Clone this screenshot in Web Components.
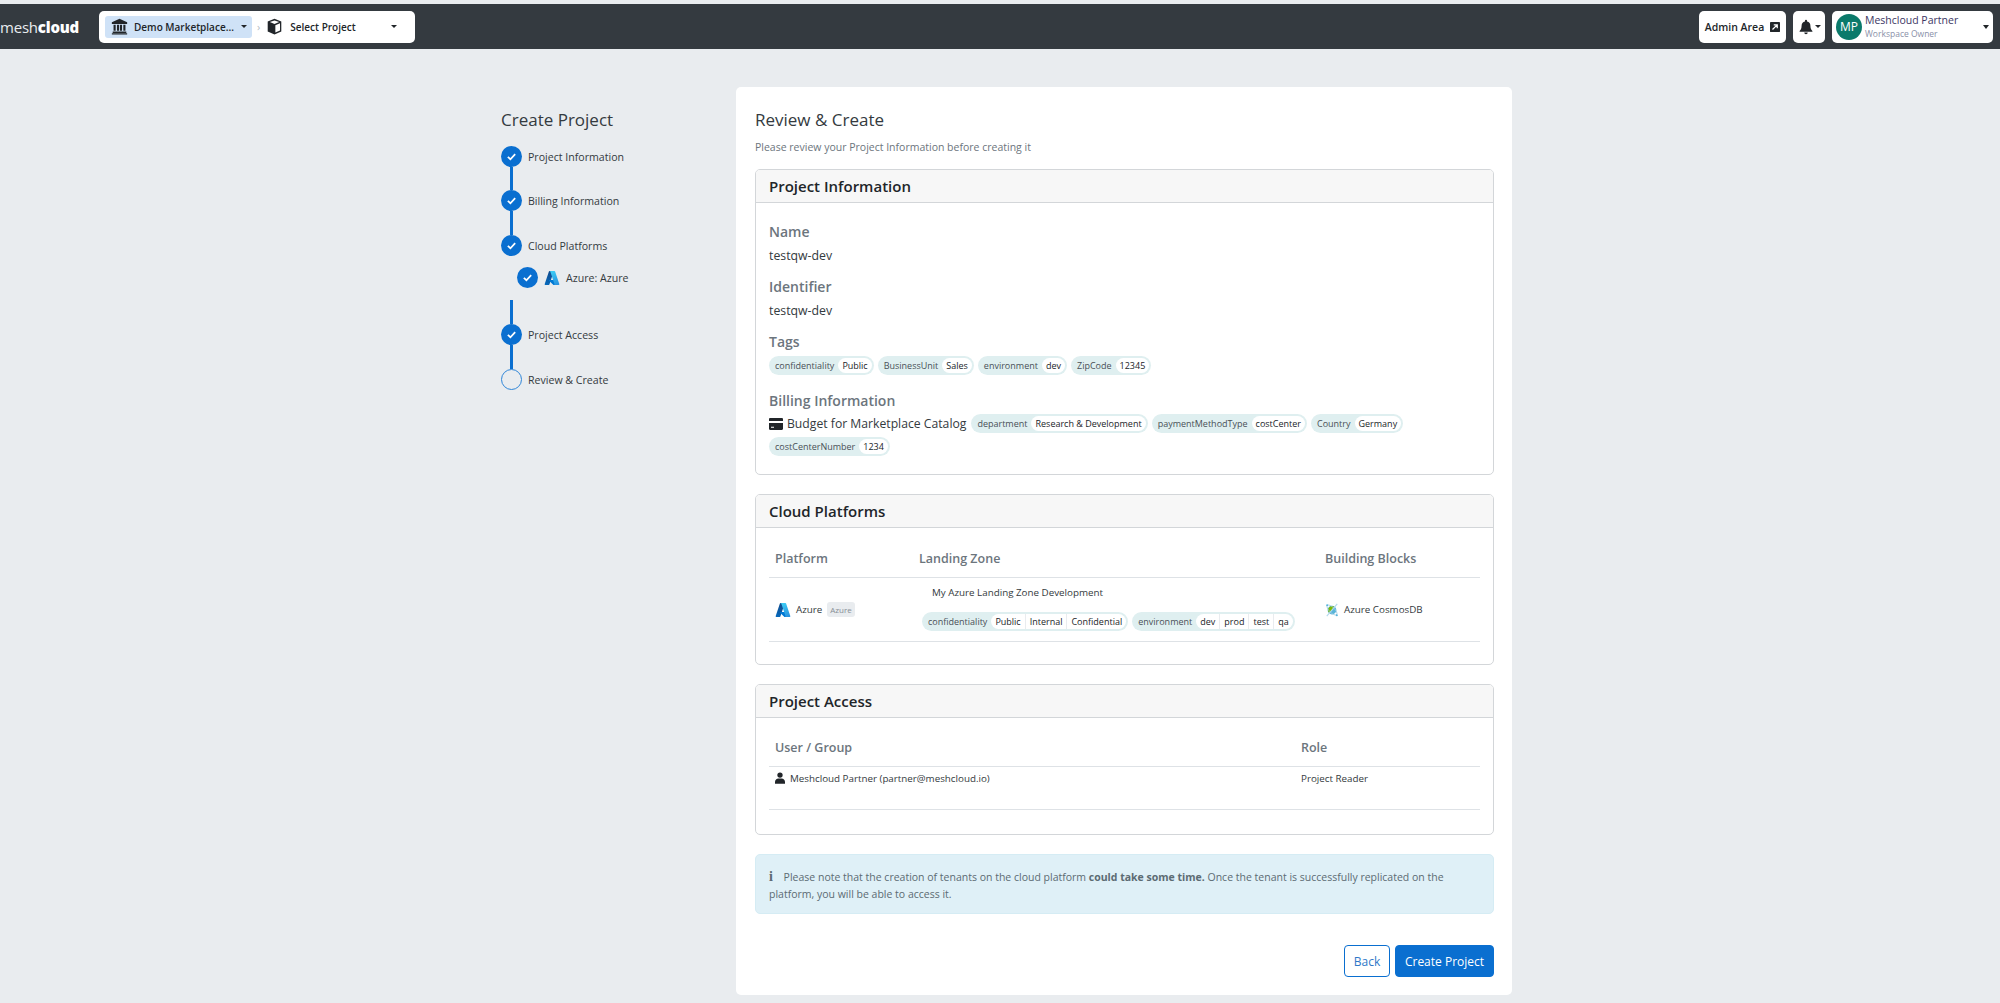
<!DOCTYPE html>
<html lang="en">
<head>
<meta charset="utf-8">
<title>Create Project</title>
<style>
  html, body { margin: 0; height: 100%; overflow: hidden; }
  body { background: #e9ecef; padding-top: 4px; box-sizing: border-box; font-family: "Open Sans", "Liberation Sans", sans-serif; color: #343a40; }
</style>
</head>
<body>
<mesh-navbar></mesh-navbar>
<mesh-page>
  <mesh-stepper slot="side"></mesh-stepper>
  <mesh-review></mesh-review>
</mesh-page>

<script>
const ICONS = {
  check: '<svg viewBox="0 0 12 12" width="11" height="11"><path d="M2 6.4 4.8 9 10 3.4" fill="none" stroke="#fff" stroke-width="1.9"/></svg>',
  azure: size => `<svg viewBox="0 0 96 96" width="${size}" height="${size}"><defs><linearGradient id="az1" x1="0.6" y1="0" x2="0.2" y2="1"><stop offset="0" stop-color="#114a8b"/><stop offset="1" stop-color="#0669bc"/></linearGradient><linearGradient id="az2" x1="0.3" y1="0" x2="0.7" y2="1"><stop offset="0" stop-color="#3ccbf4"/><stop offset="1" stop-color="#2892df"/></linearGradient></defs><path d="M33.34 6.54h26.04L32.36 86.55a4.15 4.15 0 0 1-3.94 2.83H8.15a4.14 4.14 0 0 1-3.93-5.47L29.4 9.37a4.15 4.15 0 0 1 3.94-2.83z" fill="url(#az1)"/><path d="M71.17 60.26H29.88a1.91 1.91 0 0 0-1.3 3.31l26.53 24.76a4.17 4.17 0 0 0 2.85 1.12h23.38z" fill="#0078d4"/><path d="M66.6 9.36a4.14 4.14 0 0 0-3.93-2.82H33.65a4.15 4.15 0 0 1 3.93 2.82l25.18 74.62a4.15 4.15 0 0 1-3.93 5.48h29.02a4.15 4.15 0 0 0 3.93-5.48z" fill="url(#az2)"/></svg>`,
  bank: '<svg viewBox="0 0 20 20" width="17" height="17"><path d="M10 1 19 5v2H1V5zM3 8h2.500v7H3zM7 8h2.500v7H7zM10.500 8H13v7h-2.500zM14.500 8H17v7h-2.500zM2 16h16v1.500H2zM1 18h18v1.500H1z" fill="#212529"/></svg>',
  cube: '<svg viewBox="0 0 20 20" width="17" height="17"><path d="M10 1 18 4v12l-8 3.500L2 16V4z" fill="#212529"/><path d="M10 2.800 15.500 4.800 10 7 4.500 4.800z" fill="#fff"/><path d="M11 8.500 16.500 6.300V14.800L11 17.200z" fill="#fff"/></svg>',
  bell: '<svg viewBox="0 0 20 20" width="16" height="16"><path d="M10 1a1.300 1.300 0 0 0-1.300 1.300v.8A5.500 5.500 0 0 0 4.500 8.500c0 3.500-1 5-2.500 6.500v1h16v-1c-1.500-1.500-2.500-3-2.500-6.500a5.500 5.500 0 0 0-4.200-5.400v-.8A1.300 1.300 0 0 0 10 1zM7.800 17a2.200 2.200 0 0 0 4.400 0z" fill="#212529"/></svg>',
  external: '<svg viewBox="0 0 12 12" width="10" height="10"><rect width="12" height="12" rx="1" fill="#212529"/><path d="M3 9 8 4M4.500 3.300H8.700V7.500" fill="none" stroke="#fff" stroke-width="1.500"/></svg>',
  card: '<svg viewBox="0 0 14 12" width="14" height="12"><path d="M1.200 0h11.600C13.500 0 14 .5 14 1.200V3H0V1.200C0 .5.500 0 1.200 0zM0 5h14v5.800c0 .7-.5 1.200-1.200 1.200H1.200C.5 12 0 11.500 0 10.800zm2 3.800v1h3v-1z" fill="#212529"/></svg>',
  user: '<svg viewBox="0 0 12 14" width="10" height="12"><circle cx="6" cy="3.500" r="3.200" fill="#212529"/><path d="M0 14v-2.500C0 9 2 7.500 4 7.500h4c2 0 4 1.500 4 4V14z" fill="#212529"/></svg>',
  cosmos: '<svg viewBox="0 0 16 18" width="14" height="16"><circle cx="8" cy="9" r="5" fill="#59b4d9"/><path d="M3.500 9a4.500 4.500 0 0 1 7-3.700L5 12.500A4.500 4.500 0 0 1 3.500 9z" fill="#7fba00"/><path d="M2 16 14 2" stroke="#b3d9ec" stroke-width="1.300"/><ellipse cx="8" cy="9" rx="7.500" ry="3" fill="none" stroke="#9ccbe3" stroke-width=".9" transform="rotate(45 8 9)"/><circle cx="2.500" cy="3.500" r="1.200" fill="#59b4d9"/><circle cx="13.500" cy="15" r="1.200" fill="#59b4d9"/></svg>',
};

class MeshNavbar extends HTMLElement {
  constructor() {
    super();
    this.attachShadow({ mode: 'open' });
  }

  connectedCallback() {
    this.shadowRoot.innerHTML = `
      <style>
        :host { display: flex; align-items: center; height: 45px; background: #343a40; padding: 0 7px 0 0; font-family: "Open Sans", "Liberation Sans", sans-serif; white-space: nowrap; }
        .logo { width: 99px; color: #e9ecef; font-size: 15px; letter-spacing: -0.2px; }
        .logo b { color: #fff; font-weight: 800; }
        .box { background: #fff; border-radius: 5px; height: 32px; display: flex; align-items: center; box-sizing: border-box; color: #212529; font-size: 10px; font-weight: 600; }
        .crumbs { width: 316px; padding: 0 6px; }
        .workspace { width: 147px; height: 22px; background: #cfe2f7; border-radius: 3px; display: flex; align-items: center; padding-left: 6px; box-sizing: border-box; gap: 6px; }
        .workspace .caret { margin-left: 1px; }
        .sep { color: #b5bcc3; margin: 0 6px 0 5px; font-size: 11px; font-weight: 400; }
        .project { flex: 1; display: flex; align-items: center; gap: 7px; }
        .caret { display: inline-block; border-top: 3px solid #212529; border-left: 3px solid transparent; border-right: 3px solid transparent; }
        .spacer { flex: 1; }
        .admin { width: 87px; margin-right: 7px; justify-content: center; gap: 6px; font-size: 10.500px; }
        .bell { width: 32px; margin-right: 7px; justify-content: center; gap: 1px; }
        .user { width: 161px; padding: 0 4px; gap: 3px; }
        .avatar { width: 26px; height: 26px; border-radius: 50%; background: #0b7a6b; color: #fff; font-weight: 400; font-size: 12px; display: flex; align-items: center; justify-content: center; }
        .who { flex: 1; line-height: 1; }
        .who div { color: #3b3663; font-size: 10.500px; font-weight: 400; margin-bottom: 4px; }
        .who small { display: block; color: #8a90a8; font-size: 8.500px; font-weight: 400; }
      </style>
      <div class="logo">mesh<b>cloud</b></div>
      <div class="box crumbs">
        <div class="workspace">${ICONS.bank}<span>Demo Marketplace...</span><span class="caret"></span></div>
        <span class="sep">›</span>
        <div class="project">${ICONS.cube}<span style="flex:1">Select Project</span><span class="caret" style="margin-right:12px"></span></div>
      </div>
      <div class="spacer"></div>
      <div class="box admin"><span>Admin Area</span>${ICONS.external}</div>
      <div class="box bell">${ICONS.bell}<span class="caret"></span></div>
      <div class="box user">
        <div class="avatar">MP</div>
        <div class="who"><div>Meshcloud Partner</div><small>Workspace Owner</small></div>
        <span class="caret" style="border-width:4px 3px 0"></span>
      </div>
    `;
  }
}
customElements.define('mesh-navbar', MeshNavbar);

class MeshPage extends HTMLElement {
  constructor() {
    super();
    this.attachShadow({ mode: 'open' });
  }

  connectedCallback() {
    this.shadowRoot.innerHTML = `
      <style>
        :host { display: flex; padding: 38px 0 0 501px; }
        .side { width: 235px; flex: none; }
        .main { width: 776px; flex: none; background: #fff; border-radius: 5px; height: 908px; box-sizing: border-box; padding: 21px 18px 0 19px; }
      </style>
      <div class="side"><slot name="side"></slot></div>
      <div class="main"><slot></slot></div>
    `;
  }
}
customElements.define('mesh-page', MeshPage);

class MeshStep extends HTMLElement {
  constructor() {
    super();
    this.attachShadow({ mode: 'open' });
  }

  connectedCallback() {
    const open = this.hasAttribute('open');
    this.shadowRoot.innerHTML = `
      <style>
        :host { display: flex; align-items: center; height: 21px; font-size: 10.600px; color: #343a40; }
        .dot { width: 21px; height: 21px; box-sizing: border-box; border-radius: 50%; background: #0a6fd0; display: flex; align-items: center; justify-content: center; margin-right: 6px; flex: none; }
        .dot.open { background: transparent; border: 1.500px solid #2f86d8; }
        ::slotted(svg) { margin-right: 6px; }
      </style>
      <div class="dot ${open ? 'open' : ''}">${open ? '' : ICONS.check}</div>
      <slot></slot>
    `;
  }
}
customElements.define('mesh-step', MeshStep);

class MeshStepper extends HTMLElement {
  constructor() {
    super();
    this.attachShadow({ mode: 'open' });
  }

  connectedCallback() {
    this.shadowRoot.innerHTML = `
      <style>
        :host { display: block; padding-top: 21px; }
        h2 { margin: 0 0 14px; font-size: 17px; font-weight: 400; line-height: 24px; color: #343a40; }
        .line { width: 3px; height: 23px; margin-left: 9px; background: #0a6fd0; }
        .line.long { height: 24px; }
        .line.short { height: 24px; margin-top: 12px; }
        .sub { margin: 11px 0 0 16px; }
      </style>
      <h2>Create Project</h2>
      <mesh-step>Project Information</mesh-step>
      <div class="line"></div>
      <mesh-step>Billing Information</mesh-step>
      <div class="line long"></div>
      <mesh-step>Cloud Platforms</mesh-step>
      <mesh-step class="sub">${ICONS.azure(16)}Azure: Azure</mesh-step>
      <div class="line short"></div>
      <mesh-step>Project Access</mesh-step>
      <div class="line long"></div>
      <mesh-step open>Review &amp; Create</mesh-step>
    `;
  }
}
customElements.define('mesh-stepper', MeshStepper);

class MeshTag extends HTMLElement {
  constructor() {
    super();
    this.attachShadow({ mode: 'open' });
  }

  connectedCallback() {
    const values = (this.getAttribute('values') || '').split(',');
    const valuesHtml = values.map(v => `<span class="val">${v}</span>`).join('');
    this.shadowRoot.innerHTML = `
      <style>
        :host { display: inline-flex; align-items: center; height: 19px; box-sizing: border-box; background: #dfeff0; border-radius: 10px; padding: 2px; font-size: 9px; color: #495057; white-space: nowrap; }
        .key { padding: 0 4px; }
        .vals { display: flex; height: 15px; background: #fff; border-radius: 8px; align-items: center; color: #212529; }
        .val { padding: 0 4px; border-left: 1px solid #e9ecef; line-height: 15px; }
        .val:first-child { border-left: 0; }
      </style>
      <span class="key">${this.getAttribute('name')}</span>
      <span class="vals">${valuesHtml}</span>
    `;
  }
}
customElements.define('mesh-tag', MeshTag);

class MeshCard extends HTMLElement {
  constructor() {
    super();
    this.attachShadow({ mode: 'open' });
  }

  connectedCallback() {
    this.shadowRoot.innerHTML = `
      <style>
        :host { display: block; border: 1px solid #d3d6d9; border-radius: 5px; overflow: hidden; margin-bottom: 19px; box-sizing: border-box; }
        .head { height: 33px; box-sizing: border-box; background: #f7f7f7; border-bottom: 1px solid #d3d6d9; padding: 0 13px; display: flex; align-items: center; font-size: 15px; font-weight: 600; color: #212529; }
        .body { padding: 0 13px; }
      </style>
      <div class="head">${this.getAttribute('title')}</div>
      <div class="body"><slot></slot></div>
    `;
  }
}
customElements.define('mesh-card', MeshCard);

class MeshReview extends HTMLElement {
  constructor() {
    super();
    this.attachShadow({ mode: 'open' });
  }

  connectedCallback() {
    this.shadowRoot.innerHTML = `
      <style>
        :host { display: block; }
        h2 { margin: 0; font-size: 17px; font-weight: 400; line-height: 24px; color: #343a40; }
        .hint { margin: 7px 0 14px; font-size: 10.500px; line-height: 16px; height: 16px; color: #6c757d; }
        .card-info { height: 306px; }
        .card-cloud { height: 171px; }
        .card-access { height: 151px; }
        h4 { margin: 0; font-size: 14px; line-height: 18px; font-weight: 600; color: #6c757d; }
        .v { font-size: 12.300px; line-height: 18px; color: #343a40; }
        .info { padding-top: 20px; }
        .info .v { margin: 6px 0 13px; }
        .tags { display: flex; flex-wrap: wrap; gap: 4px; margin-top: 5px; align-items: center; }
        .billing { display: flex; flex-wrap: wrap; gap: 4px; align-items: center; margin-top: 4px; row-gap: 4px; }
        .billing .budget { display: flex; align-items: center; gap: 4px; font-size: 12.200px; color: #343a40; margin-right: 1px; }
        .mt { margin-top: 17px; }
        .grid { display: grid; font-size: 9.800px; color: #343a40; }
        .cloud { grid-template-columns: 144px 406px 1fr; margin-top: 12px; }
        .access { grid-template-columns: 526px 1fr; margin-top: 11px; }
        .th { height: 37px; display: flex; align-items: center; padding-left: 6px; font-size: 12.500px; font-weight: 600; color: #6c757d; border-bottom: 1px solid #dee2e6; }
        .td { display: flex; align-items: center; padding-left: 6px; border-bottom: 1px solid #dee2e6; }
        .cloud .td { height: 63px; }
        .access .td { align-items: flex-start; padding-top: 5px; box-sizing: border-box; height: 43px; }
        .gap5 { gap: 5px; }
        .badge { background: #e9ecef; color: #868e96; font-size: 8px; padding: 2px 3px; border-radius: 3px; }
        .zone { display: block; padding-left: 9px; }
        .zone .t { padding-left: 10px; line-height: 14px; margin-bottom: 12px; margin-top: 8px; }
        .alert { height: 60px; box-sizing: border-box; background: #dff0f7; border: 1px solid #d5ecf4; border-radius: 5px; padding: 13px 13px 0; font-size: 10.500px; line-height: 17px; color: #5c6b73; }
        .alert b { font-weight: 700; }
        .alert i { font-family: "Liberation Serif", serif; font-style: normal; font-weight: 700; font-size: 14px; margin-right: 8px; }
        .actions { display: flex; justify-content: flex-end; gap: 5px; margin-top: 31px; }
        .btn { height: 32px; box-sizing: border-box; display: flex; align-items: center; justify-content: center; border-radius: 4px; font-size: 12px; border: 1px solid #0a6fd0; }
        .back { width: 46px; color: #2f78c8; background: #fff; }
        .create { width: 99px; color: #fff; background: #0a6fd0; }
      </style>
      <h2>Review &amp; Create</h2>
      <div class="hint">Please review your Project Information before creating it</div>

      <mesh-card class="card-info" title="Project Information">
        <div class="info">
          <h4>Name</h4>
          <div class="v">testqw-dev</div>
          <h4>Identifier</h4>
          <div class="v">testqw-dev</div>
          <h4>Tags</h4>
          <div class="tags">
            <mesh-tag name="confidentiality" values="Public"></mesh-tag>
            <mesh-tag name="BusinessUnit" values="Sales"></mesh-tag>
            <mesh-tag name="environment" values="dev"></mesh-tag>
            <mesh-tag name="ZipCode" values="12345"></mesh-tag>
          </div>
          <h4 class="mt">Billing Information</h4>
          <div class="billing">
            <span class="budget">${ICONS.card}Budget for Marketplace Catalog</span>
            <mesh-tag name="department" values="Research &amp; Development"></mesh-tag>
            <mesh-tag name="paymentMethodType" values="costCenter"></mesh-tag>
            <mesh-tag name="Country" values="Germany"></mesh-tag>
            <mesh-tag name="costCenterNumber" values="1234"></mesh-tag>
          </div>
        </div>
      </mesh-card>

      <mesh-card class="card-cloud" title="Cloud Platforms">
        <div class="grid cloud">
          <div class="th">Platform</div><div class="th">Landing Zone</div><div class="th">Building Blocks</div>
          <div class="td gap5">${ICONS.azure(16)}<span>Azure</span><span class="badge">Azure</span></div>
          <div class="td zone">
            <div class="t">My Azure Landing Zone Development</div>
            <div class="tags" style="margin:0">
              <mesh-tag name="confidentiality" values="Public,Internal,Confidential"></mesh-tag>
              <mesh-tag name="environment" values="dev,prod,test,qa"></mesh-tag>
            </div>
          </div>
          <div class="td gap5">${ICONS.cosmos}<span>Azure CosmosDB</span></div>
        </div>
      </mesh-card>

      <mesh-card class="card-access" title="Project Access">
        <div class="grid access">
          <div class="th">User / Group</div><div class="th">Role</div>
          <div class="td gap5">${ICONS.user}<span>Meshcloud Partner (partner@meshcloud.io)</span></div>
          <div class="td">Project Reader</div>
        </div>
      </mesh-card>

      <div class="alert"><i>i</i> Please note that the creation of tenants on the cloud platform <b>could take some time.</b> Once the tenant is successfully replicated on the platform, you will be able to access it.</div>

      <div class="actions">
        <div class="btn back">Back</div>
        <div class="btn create">Create Project</div>
      </div>
    `;
  }
}
customElements.define('mesh-review', MeshReview);
</script>
</body>
</html>
